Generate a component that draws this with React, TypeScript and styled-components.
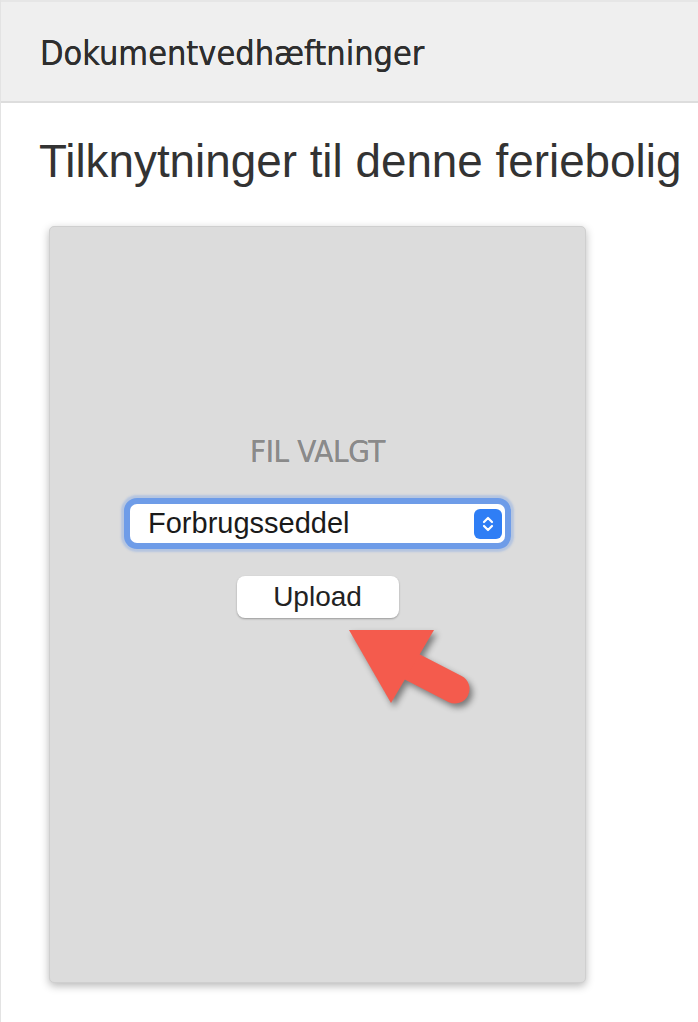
import React from "react";
import styled, { createGlobalStyle } from "styled-components";

const GlobalStyle = createGlobalStyle`
  html, body { margin: 0; padding: 0; background: #ffffff; }
  * { box-sizing: border-box; }
`;

const Page = styled.div`
  min-height: 1022px;
  border-left: 1px solid #e3e3e3;
  background: #ffffff;
`;

const Header = styled.header`
  height: 103px;
  display: flex;
  align-items: center;
  padding-left: 39px;
  padding-top: 2px;
  background: #efefef;
  border-top: 2px solid #e6e6e6;
  border-bottom: 2px solid #dddddd;
  font-family: "DejaVu Sans Condensed", "DejaVu Sans", sans-serif;
  font-stretch: condensed;
  font-size: 34px;
  color: #2e2e2e;
  letter-spacing: 0;
  text-shadow: 0 0 0.4px #2e2e2e;
`;

const Content = styled.main`
  padding: 0 0 0 38px;
`;

const Heading = styled.h1`
  margin: 0;
  padding-top: 33px;
  font-family: "Liberation Sans", Arial, sans-serif;
  font-weight: normal;
  font-size: 45.8px;
  line-height: 52px;
  color: #333333;
  white-space: nowrap;
`;

const Card = styled.section`
  position: relative;
  margin: 38px 0 0 10px;
  width: 537px;
  height: 757px;
  background: #dcdcdc;
  border: 1px solid #cfcfcf;
  border-radius: 5px;
  box-shadow: 0 3px 9px rgba(0, 0, 0, 0.28);
  display: flex;
  flex-direction: column;
  align-items: center;
  padding-top: 207px;
`;

const Label = styled.div`
  font-family: "DejaVu Sans Condensed", "DejaVu Sans", sans-serif;
  font-stretch: condensed;
  font-size: 31px;
  line-height: 34px;
  color: #8a8a8a;
  letter-spacing: -0.3px;
  text-shadow: 0 0 0.5px #8a8a8a;
`;

const SelectBox = styled.div`
  margin-top: 36px;
  width: 375px;
  height: 39px;
  display: flex;
  align-items: center;
  justify-content: space-between;
  padding: 0 3px 0 18px;
  background: #ffffff;
  border-radius: 7px;
  box-shadow: 0 0 0 6px #6e9ce8, 0 0 2px 9px rgba(110, 156, 232, 0.35);
  font-family: "Liberation Sans", Arial, sans-serif;
  font-size: 29px;
  color: #1a1a1a;
`;

const Stepper = styled.span`
  width: 28px;
  height: 30px;
  border-radius: 6px;
  background: #2f7ef5;
  display: flex;
  align-items: center;
  justify-content: center;
`;

const UploadButton = styled.button`
  margin-top: 33px;
  width: 162px;
  height: 42px;
  border: none;
  border-radius: 8px;
  background: #ffffff;
  box-shadow: 0 1px 2px rgba(0, 0, 0, 0.3);
  font-family: "Liberation Sans", Arial, sans-serif;
  font-size: 28px;
  color: #222222;
  padding: 0;
`;

const Arrow = styled.svg`
  position: absolute;
  left: 281px;
  top: 374px;
  width: 160px;
  height: 130px;
  filter: drop-shadow(3px 4px 3px rgba(0, 0, 0, 0.45));
`;

export default function App() {
  return (
    <>
      <GlobalStyle />
      <Page>
        <Header>Dokumentvedhæftninger</Header>
        <Content>
          <Heading>Tilknytninger til denne feriebolig</Heading>
          <Card>
            <Label>FIL VALGT</Label>
            <SelectBox>
              <span>Forbrugsseddel</span>
              <Stepper>
                <svg width="14" height="20" viewBox="0 0 14 20" fill="none">
                  <path d="M3 8 L7 4 L11 8" stroke="#fff" strokeWidth="2.2" strokeLinecap="round" strokeLinejoin="round" />
                  <path d="M3 12 L7 16 L11 12" stroke="#fff" strokeWidth="2.2" strokeLinecap="round" strokeLinejoin="round" />
                </svg>
              </Stepper>
            </SelectBox>
            <UploadButton>Upload</UploadButton>
            <Arrow viewBox="0 0 160 130">
              <line x1="62" y1="56" x2="124" y2="88" stroke="#f45b4d" strokeWidth="29" strokeLinecap="round" />
              <polygon points="18,29 103,29 60,102" fill="#f45b4d" />
            </Arrow>
          </Card>
        </Content>
      </Page>
    </>
  );
}
